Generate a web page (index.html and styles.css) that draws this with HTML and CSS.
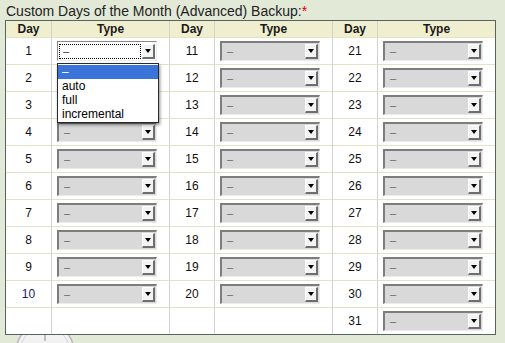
FILE: index.html
```html
<!DOCTYPE html>
<html>
<head>
<meta charset="utf-8">
<link rel="stylesheet" href="styles.css">
</head>
<body>
<div class="page">
  <div class="title">Custom Days of the Month (Advanced) Backup:<span class="req">*</span></div>
  <table class="grid">
    <thead>
      <tr>
        <th class="c1">Day</th><th class="c2">Type</th>
        <th class="c3">Day</th><th class="c4">Type</th>
        <th class="c5">Day</th><th class="c6">Type</th>
      </tr>
    </thead>
    <tbody>
      <tr>
        <td class="day">1</td>
        <td class="type">
          <div class="wrap">
            <div class="sel focus"><span class="val">–</span><span class="btn"></span></div>
            <ul class="list">
              <li class="hl">–</li>
              <li>auto</li>
              <li>full</li>
              <li>incremental</li>
            </ul>
          </div>
        </td>
        <td class="day">11</td>
        <td class="type"><div class="sel"><span class="val">–</span><span class="btn"></span></div></td>
        <td class="day">21</td>
        <td class="type"><div class="sel"><span class="val">–</span><span class="btn"></span></div></td>
      </tr>
      <tr>
        <td class="day">2</td>
        <td class="type"><div class="sel"><span class="val">–</span><span class="btn"></span></div></td>
        <td class="day">12</td>
        <td class="type"><div class="sel"><span class="val">–</span><span class="btn"></span></div></td>
        <td class="day">22</td>
        <td class="type"><div class="sel"><span class="val">–</span><span class="btn"></span></div></td>
      </tr>
      <tr>
        <td class="day">3</td>
        <td class="type"><div class="sel"><span class="val">–</span><span class="btn"></span></div></td>
        <td class="day">13</td>
        <td class="type"><div class="sel"><span class="val">–</span><span class="btn"></span></div></td>
        <td class="day">23</td>
        <td class="type"><div class="sel"><span class="val">–</span><span class="btn"></span></div></td>
      </tr>
      <tr>
        <td class="day">4</td>
        <td class="type"><div class="sel"><span class="val">–</span><span class="btn"></span></div></td>
        <td class="day">14</td>
        <td class="type"><div class="sel"><span class="val">–</span><span class="btn"></span></div></td>
        <td class="day">24</td>
        <td class="type"><div class="sel"><span class="val">–</span><span class="btn"></span></div></td>
      </tr>
      <tr>
        <td class="day">5</td>
        <td class="type"><div class="sel"><span class="val">–</span><span class="btn"></span></div></td>
        <td class="day">15</td>
        <td class="type"><div class="sel"><span class="val">–</span><span class="btn"></span></div></td>
        <td class="day">25</td>
        <td class="type"><div class="sel"><span class="val">–</span><span class="btn"></span></div></td>
      </tr>
      <tr>
        <td class="day">6</td>
        <td class="type"><div class="sel"><span class="val">–</span><span class="btn"></span></div></td>
        <td class="day">16</td>
        <td class="type"><div class="sel"><span class="val">–</span><span class="btn"></span></div></td>
        <td class="day">26</td>
        <td class="type"><div class="sel"><span class="val">–</span><span class="btn"></span></div></td>
      </tr>
      <tr>
        <td class="day">7</td>
        <td class="type"><div class="sel"><span class="val">–</span><span class="btn"></span></div></td>
        <td class="day">17</td>
        <td class="type"><div class="sel"><span class="val">–</span><span class="btn"></span></div></td>
        <td class="day">27</td>
        <td class="type"><div class="sel"><span class="val">–</span><span class="btn"></span></div></td>
      </tr>
      <tr>
        <td class="day">8</td>
        <td class="type"><div class="sel"><span class="val">–</span><span class="btn"></span></div></td>
        <td class="day">18</td>
        <td class="type"><div class="sel"><span class="val">–</span><span class="btn"></span></div></td>
        <td class="day">28</td>
        <td class="type"><div class="sel"><span class="val">–</span><span class="btn"></span></div></td>
      </tr>
      <tr>
        <td class="day">9</td>
        <td class="type"><div class="sel"><span class="val">–</span><span class="btn"></span></div></td>
        <td class="day">19</td>
        <td class="type"><div class="sel"><span class="val">–</span><span class="btn"></span></div></td>
        <td class="day">29</td>
        <td class="type"><div class="sel"><span class="val">–</span><span class="btn"></span></div></td>
      </tr>
      <tr>
        <td class="day navy">10</td>
        <td class="type"><div class="sel"><span class="val">–</span><span class="btn"></span></div></td>
        <td class="day">20</td>
        <td class="type"><div class="sel"><span class="val">–</span><span class="btn"></span></div></td>
        <td class="day">30</td>
        <td class="type"><div class="sel"><span class="val">–</span><span class="btn"></span></div></td>
      </tr>
      <tr class="last">
        <td class="day"></td>
        <td class="type"></td>
        <td class="day"></td>
        <td class="type"></td>
        <td class="day">31</td>
        <td class="type"><div class="sel"><span class="val">–</span><span class="btn"></span></div></td>
      </tr>
    </tbody>
  </table>
  <svg class="dial" width="505" height="8" viewBox="0 0 505 8">
    <defs>
      <linearGradient id="dg" x1="0" y1="0" x2="0" y2="1">
        <stop offset="0" stop-color="#f8f8f8"/>
        <stop offset="1" stop-color="#e2e2e2"/>
      </linearGradient>
    </defs>
    <circle cx="45" cy="17" r="29" fill="url(#dg)" stroke="#b8b8b8" stroke-width="1.5"/>
    <circle cx="45" cy="17" r="25" fill="none" stroke="#d4d4d4" stroke-width="1"/>
    <line x1="45" y1="0" x2="45" y2="6" stroke="#9a9a9a" stroke-width="1.2"/>
  </svg>
</div>
</body>
</html>
```

FILE: styles.css
```css
html, body {
  margin: 0;
  padding: 0;
  background: #e3e9d7;
}

.page {
  padding: 3px 0 0 5px;
  font-family: "Liberation Sans", Arial, sans-serif;
}

.title {
  margin-left: 1px;
  font-size: 14px;
  line-height: 17px;
  height: 17px;
  color: #222;
}

.req {
  color: #e00000;
}

.grid {
  border-collapse: separate;
  border-spacing: 0;
  table-layout: fixed;
  width: 491px;
  border: 1px solid #56645f;
  background: #fff;
}

.grid th, .grid td {
  box-sizing: border-box;
  padding: 0;
  border-right: 1px solid #d2d2d2;
}

.grid th:last-child, .grid td:last-child {
  border-right: none;
}

.grid th {
  height: 17px;
  background: #efefcf;
  font-size: 12px;
  font-weight: bold;
  color: #1a1a1a;
  text-align: center;
  vertical-align: middle;
  border-bottom: 1px solid #e4e4c4;
}

.c1 { width: 46px; }
.c2 { width: 118px; }
.c3 { width: 45px; }
.c4 { width: 118px; }
.c5 { width: 45px; }
.c6 { width: 117px; }

.grid td {
  height: 27px;
  border-bottom: 1px solid #e2e2c6;
  vertical-align: middle;
}

.grid tr.last td {
  height: 26px;
  border-bottom: none;
}

.day {
  text-align: center;
  font-size: 12px;
  color: #111;
}

.day.navy {
  color: #14206a;
}

.type {
  padding-left: 5px !important;
}

.wrap {
  position: relative;
}

.sel {
  box-sizing: border-box;
  width: 100px;
  height: 20px;
  display: flex;
  align-items: center;
  justify-content: space-between;
  background: #d9d9d9;
  border-top: 2px solid #7d7d7d;
  border-left: 2px solid #7d7d7d;
  border-right: 1px solid #ececec;
  border-bottom: 1px solid #ececec;
}

.val {
  padding-left: 5px;
  font-size: 11px;
  color: #666;
  line-height: 13px;
}

.btn {
  box-sizing: border-box;
  width: 13px;
  height: 15px;
  margin-right: 1px;
  background: #f3f3f3;
  border-top: 1px solid #fff;
  border-left: 1px solid #fff;
  border-right: 2px solid #6e6e6e;
  border-bottom: 2px solid #6e6e6e;
  display: flex;
  align-items: center;
  justify-content: center;
}

.btn::after {
  content: "";
  width: 0;
  height: 0;
  border-left: 3px solid transparent;
  border-right: 3px solid transparent;
  border-top: 4px solid #000;
}

.sel.focus {
  background: #fff;
  border-top: 1px solid #8a8a8a;
  border-left: 1px solid #8a8a8a;
  padding-left: 1px;
}

.sel.focus .val {
  flex: 1;
  box-sizing: border-box;
  height: 15px;
  border: 1px dotted #000;
  padding-left: 3px;
  margin-right: 1px;
  color: #333;
}

.list {
  position: absolute;
  z-index: 5;
  left: 0;
  top: 22px;
  box-sizing: border-box;
  width: 102px;
  margin: 0;
  padding: 1px 0;
  list-style: none;
  background: #fff;
  border: 1px solid #2a2a2a;
  box-shadow: 1px 2px 3px rgba(0, 0, 0, 0.45);
}

.list li {
  height: 14px;
  line-height: 14px;
  padding-left: 4px;
  font-size: 12px;
  color: #000;
}

.list li.hl {
  background: #3a74d8;
  color: #fff;
}

.dial {
  display: block;
  margin-left: -5px;
}
```
